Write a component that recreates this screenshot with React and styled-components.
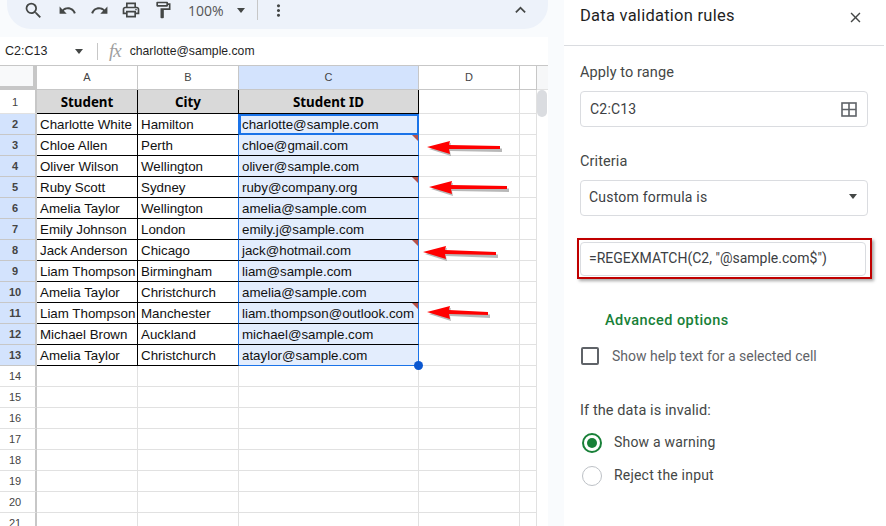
import React from 'react';
import styled, { createGlobalStyle } from 'styled-components';
import { MdSearch, MdUndo, MdRedo, MdOutlinePrint, MdOutlineFormatPaint, MdMoreVert, MdExpandLess, MdClose } from 'react-icons/md';

const Global = createGlobalStyle`
  html, body { margin: 0; padding: 0; height: 526px; overflow: hidden; background: #f9fbfd; }
  * { box-sizing: border-box; }
`;

const Page = styled.div`display: flex; width: 886px; height: 526px; overflow: hidden; font-family: Roboto, "Liberation Sans", sans-serif;`;
const Sheet = styled.div`width: 548px; margin-right: 16px; display: flex; flex-direction: column; flex: none;`;
const Toolbar = styled.div`
  height: 29px; margin-left: 7px; margin-bottom: 8px; background: #edf2fa; border-radius: 0 0 24px 24px;
  display: flex; align-items: center; padding: 0 0 9px 16px; color: #444746; flex: none;
`;
const ToolIcon = styled.span`display: flex; width: 21px; height: 21px; align-items: center; justify-content: center; margin-right: ${p => p.$gap || 0}px; font-size: ${p => p.$size || 19}px; flex: none;`;
const Zoom = styled.span`font-family: "Open Sans", Roboto, sans-serif; font-size: 14px; color: #555; width: 49px; flex: none;`;
const Caret = styled.span`width: 0; height: 0; border-left: 4.5px solid transparent; border-right: 4.5px solid transparent; border-top: 5px solid ${p => p.$c || '#444746'}; flex: none;`;
const ToolDivider = styled.span`width: 1px; height: 20px; background: #c7c7c7; margin: 0 10px 0 12px; flex: none;`;
const Spacer = styled.span`flex: 1;`;
const FormulaBar = styled.div`
  height: 28px; background: #fff; display: flex; align-items: center; font-family: "Liberation Sans", Arial, sans-serif; font-size: 12.2px; color: #1f1f1f; flex: none;
`;
const NameBox = styled.div`width: 97px; padding: 0 14px 0 5px; display: flex; justify-content: space-between; align-items: center; flex: none; font-size: 12.5px;`;
const BarDivider = styled.span`width: 1px; height: 17px; background: #c7c7c7; margin-right: 11px;`;
const Fx = styled.span`font-family: "Liberation Serif", serif; font-style: italic; font-size: 19px; color: #a0a0a0; margin-right: 9px; letter-spacing: -1px;`;
const Grid = styled.div`
  display: grid; grid-template-columns: 37px 101px 101px 180px 101px 17px 11px; grid-template-rows: 25px 24px repeat(20, 21px);
  flex: none; background: #fff; font-family: "Liberation Sans", Arial, sans-serif; position: relative;
`;
const Corner = styled.div`background: #f8f9fa; border-top: 1px solid #c7c7c7; border-right: 4px solid #c7c7c7; border-bottom: 4px solid #c7c7c7;`;
const ColHead = styled.div`
  background: ${p => p.$on ? '#d3e3fd' : '#fff'}; border-top: 1px solid #c7c7c7; border-bottom: 1px solid #c7c7c7; border-right: 1px solid #c7c7c7;
  display: flex; align-items: center; justify-content: center; font-size: 11px; color: #444; padding-bottom: 1px;
`;
const ScrollHead = styled.div`background: #f6f7f8; border-top: 1px solid #c7c7c7; border-bottom: 1px solid #e1e1e1;`;
const RowHead = styled.div`
  background: ${p => p.$on ? '#d3e3fd' : '#fff'}; border-right: 2px solid #c7c7c7; border-bottom: 1px solid ${p => p.$on ? '#c7c7c7' : '#e1e1e1'};
  display: flex; align-items: center; justify-content: center; font-size: 11px; font-weight: ${p => p.$on ? 700 : 400}; color: #444; padding-right: 5px;
`;
const Cell = styled.div`
  position: relative; background: ${p => p.$bg || '#fff'}; white-space: nowrap; overflow: ${p => p.$visible ? 'visible' : 'hidden'};
  border-right: 1px solid ${p => p.$right || '#e1e1e1'}; border-bottom: 1px solid ${p => p.$bottom || '#e1e1e1'};
  font-size: 13.33px; line-height: 20px; padding: 1px 0 0 3px; color: #111;
`;
const ActiveCell = styled(Cell)`
  box-shadow: inset 2px 2px 0 #1a73e8, inset -1px -1px 0 #1a73e8; border-right-color: #1a73e8; border-bottom-color: #1a73e8;
`;
const HeadCell = styled.div`
  background: #d9d9d9; border-right: 1px solid #000; border-bottom: 1px solid #000;
  display: flex; align-items: center; justify-content: center; font-family: "Noto Sans", "Open Sans", sans-serif; font-weight: 700; font-size: 13.33px; color: #000;
`;
const Note = styled.span`position: absolute; top: 0; right: 0; width: 0; height: 0; border-top: 6px solid #b8544b; border-left: 6px solid transparent;`;
const Handle = styled.span`position: absolute; right: -5px; bottom: -5px; width: 9px; height: 9px; border-radius: 50%; background: #0b57d0; z-index: 3;`;
const Thumb = styled.div`position: absolute; left: 537px; top: 25px; width: 10px; height: 27px; border-radius: 5px; background: #dadce0;`;
const ArrowSvg = styled.svg`position: absolute; overflow: visible; left: 0; top: -65px; width: 548px; height: 526px; pointer-events: none; z-index: 4;`;

const Panel = styled.aside`width: 322px; height: 526px; background: #fff; flex: none; color: #444746; font-size: 14px;`;
const PanelHeader = styled.header`
  height: 46px; margin-right: 2px; border-bottom: 1px solid #dadce0; padding: 0 20px 14px 16px; display: flex; align-items: center; justify-content: space-between;
  svg { margin-top: 4px; }
`;
const Title = styled.h2`margin: 0; font: 400 16.5px Roboto, sans-serif; color: #1f1f1f; letter-spacing: 0.25px;`;
const Body = styled.div`padding: 0 18px 0 16px;`;
const Label = styled.div`font-size: 14.5px; line-height: 18px; color: #444746; letter-spacing: 0.1px; margin-top: ${p => p.$top}px;`;
const Field = styled.div`
  height: 36px; border: 1px solid #dadce0; border-radius: 4px; display: flex; align-items: center; justify-content: space-between;
  padding: 0 10px ${p => p.$lift || 0}px ${p => p.$pad || 9}px; color: #3c4043; font-size: 14px; margin-top: ${p => p.$top}px; letter-spacing: 0.2px;
`;
const RedBox = styled.div`
  margin: 22px -4px 0 -3px; height: 41px; border: 2.5px solid #c00000; box-shadow: 2px 2px 3px rgba(0,0,0,.35); padding: 0 4px 0 1px; display: flex; align-items: center;
`;
const FormulaInput = styled.div`
  flex: 1; height: 34px; border: 1px solid #dadce0; border-radius: 4px; display: flex; align-items: center; padding: 0 0 1px 8px; font-size: 14px; color: #3c4043;
`;
const Advanced = styled.div`margin: 33px 0 0 25px; font-size: 14.5px; font-weight: 500; color: #188038; line-height: 18px; letter-spacing: 0.45px;`;
const CheckRow = styled.div`display: flex; align-items: center; margin-top: 17px; margin-left: 1px; font-size: 14px; color: #5f6368; letter-spacing: 0; height: 18px;`;
const Box = styled.span`width: 18px; height: 18px; border: 2px solid #5f6368; border-radius: 2px; margin-right: 13px; flex: none;`;
const RadioRow = styled.div`display: flex; align-items: center; height: 20px; margin-top: ${p => p.$top}px; margin-left: 2px; font-size: 14px; color: #444746; letter-spacing: 0.2px;`;
const RadioText = styled.span`margin-top: -2px;`;
const Radio = styled.span`
  width: 20px; height: 20px; border-radius: 50%; border: ${p => p.$on ? '2px solid #188038' : '1px solid #bdc1c6'}; margin-right: 12px; flex: none;
  display: flex; align-items: center; justify-content: center;
  &::after { content: ''; width: 10px; height: 10px; border-radius: 50%; background: ${p => p.$on ? '#188038' : 'transparent'}; }
`;

const rows = [
  ['Charlotte White', 'Hamilton', 'charlotte@sample.com'],
  ['Chloe Allen', 'Perth', 'chloe@gmail.com', true],
  ['Oliver Wilson', 'Wellington', 'oliver@sample.com'],
  ['Ruby Scott', 'Sydney', 'ruby@company.org', true],
  ['Amelia Taylor', 'Wellington', 'amelia@sample.com'],
  ['Emily Johnson', 'London', 'emily.j@sample.com'],
  ['Jack Anderson', 'Chicago', 'jack@hotmail.com', true],
  ['Liam Thompson', 'Birmingham', 'liam@sample.com'],
  ['Amelia Taylor', 'Christchurch', 'amelia@sample.com'],
  ['Liam Thompson', 'Manchester', 'liam.thompson@outlook.com', true],
  ['Michael Brown', 'Auckland', 'michael@sample.com'],
  ['Amelia Taylor', 'Christchurch', 'ataylor@sample.com'],
];

const arrows = [[427, 147, 500, 148], [429, 187, 507, 188], [423, 252, 496, 254], [427, 312, 488, 314]];

const Arrow = ({ x1, y1, x2, y2 }) => (
  <g>
    <path d={`M${x1 + 2} ${y1 + 2} L${x1 + 24} ${y1 - 4} L${x1 + 23} ${y1} L${x2 + 2} ${y2 + 0.5} L${x2 + 2} ${y2 + 4} L${x1 + 23} ${y1 + 4} L${x1 + 24} ${y1 + 9} Z`} fill="rgba(0,0,0,.28)" />
    <path d={`M${x1} ${y1} L${x1 + 23} ${y1 - 6} L${x1 + 22} ${y1 - 2} L${x2} ${y2 - 2} L${x2} ${y2 + 1} L${x1 + 22} ${y1 + 2} L${x1 + 23} ${y1 + 7} Z`} fill="#f00" />
  </g>
);

export default function App() {
  return (
    <Page>
      <Global />
      <Sheet>
        <Toolbar>
          <ToolIcon $size={21} $gap={13}><MdSearch /></ToolIcon>
          <ToolIcon $gap={11}><MdUndo /></ToolIcon>
          <ToolIcon $gap={10}><MdRedo /></ToolIcon>
          <ToolIcon $size={20} $gap={11}><MdOutlinePrint /></ToolIcon>
          <ToolIcon $size={20} $gap={15}><MdOutlineFormatPaint /></ToolIcon>
          <Zoom>100%</Zoom>
          <Caret />
          <ToolDivider />
          <ToolIcon><MdMoreVert /></ToolIcon>
          <Spacer />
          <ToolIcon $size={22} $gap={17}><MdExpandLess /></ToolIcon>
        </Toolbar>
        <FormulaBar>
          <NameBox>C2:C13<Caret /></NameBox>
          <BarDivider />
          <Fx>fx</Fx>
          charlotte@sample.com
        </FormulaBar>
        <Grid>
          <Corner />
          <ColHead>A</ColHead>
          <ColHead>B</ColHead>
          <ColHead $on>C</ColHead>
          <ColHead>D</ColHead>
          <ColHead />
          <ScrollHead />

          <RowHead>1</RowHead>
          <HeadCell>Student</HeadCell>
          <HeadCell>City</HeadCell>
          <HeadCell>Student ID</HeadCell>
          <Cell />
          <Cell />
          <span />

          {rows.map((r, i) => {
            const last = i === rows.length - 1;
            const C = i === 0 ? ActiveCell : Cell;
            return (
              <React.Fragment key={i}>
                <RowHead $on>{i + 2}</RowHead>
                <Cell $right="#000" $bottom="#000">{r[0]}</Cell>
                <Cell $right="#1a73e8" $bottom="#000">{r[1]}</Cell>
                <C $bg="#e3edfd" $right="#1a73e8" $bottom={last ? '#1a73e8' : '#000'} $visible={last}>
                  {r[2]}
                  {r[3] && <Note />}
                  {last && <Handle />}
                </C>
                <Cell />
                <Cell />
                <span />
              </React.Fragment>
            );
          })}

          {[14, 15, 16, 17, 18, 19, 20, 21].map(n => (
            <React.Fragment key={n}>
              <RowHead>{n}</RowHead>
              <Cell /><Cell /><Cell /><Cell /><Cell />
              <span />
            </React.Fragment>
          ))}
          <Thumb />
          <ArrowSvg viewBox="0 0 548 526">
            {arrows.map(([a, b, c, d], i) => <Arrow key={i} x1={a} y1={b} x2={c} y2={d} />)}
          </ArrowSvg>
        </Grid>
      </Sheet>
      <Panel>
        <PanelHeader>
          <Title>Data validation rules</Title>
          <MdClose size={17} color="#444746" />
        </PanelHeader>
        <Body>
          <Label $top={18}>Apply to range</Label>
          <Field $top={9}>
            C2:C13
            <svg width="16" height="15" viewBox="0 0 16 15" fill="none" stroke="#5f6368" strokeWidth="1.6">
              <rect x="1" y="1" width="14" height="13" />
              <path d="M8 1v13M1 7.5h14" />
            </svg>
          </Field>
          <Label $top={26}>Criteria</Label>
          <Field $top={9} $pad={8} $lift={3}>
            Custom formula is
            <Caret />
          </Field>
          <RedBox>
            <FormulaInput>=REGEXMATCH(C2, "@sample.com$")</FormulaInput>
          </RedBox>
          <Advanced>Advanced options</Advanced>
          <CheckRow><Box />Show help text for a selected cell</CheckRow>
          <Label $top={37}>If the data is invalid:</Label>
          <RadioRow $top={13}><Radio $on /><RadioText>Show a warning</RadioText></RadioRow>
          <RadioRow $top={13}><Radio /><RadioText>Reject the input</RadioText></RadioRow>
        </Body>
      </Panel>
    </Page>
  );
}
